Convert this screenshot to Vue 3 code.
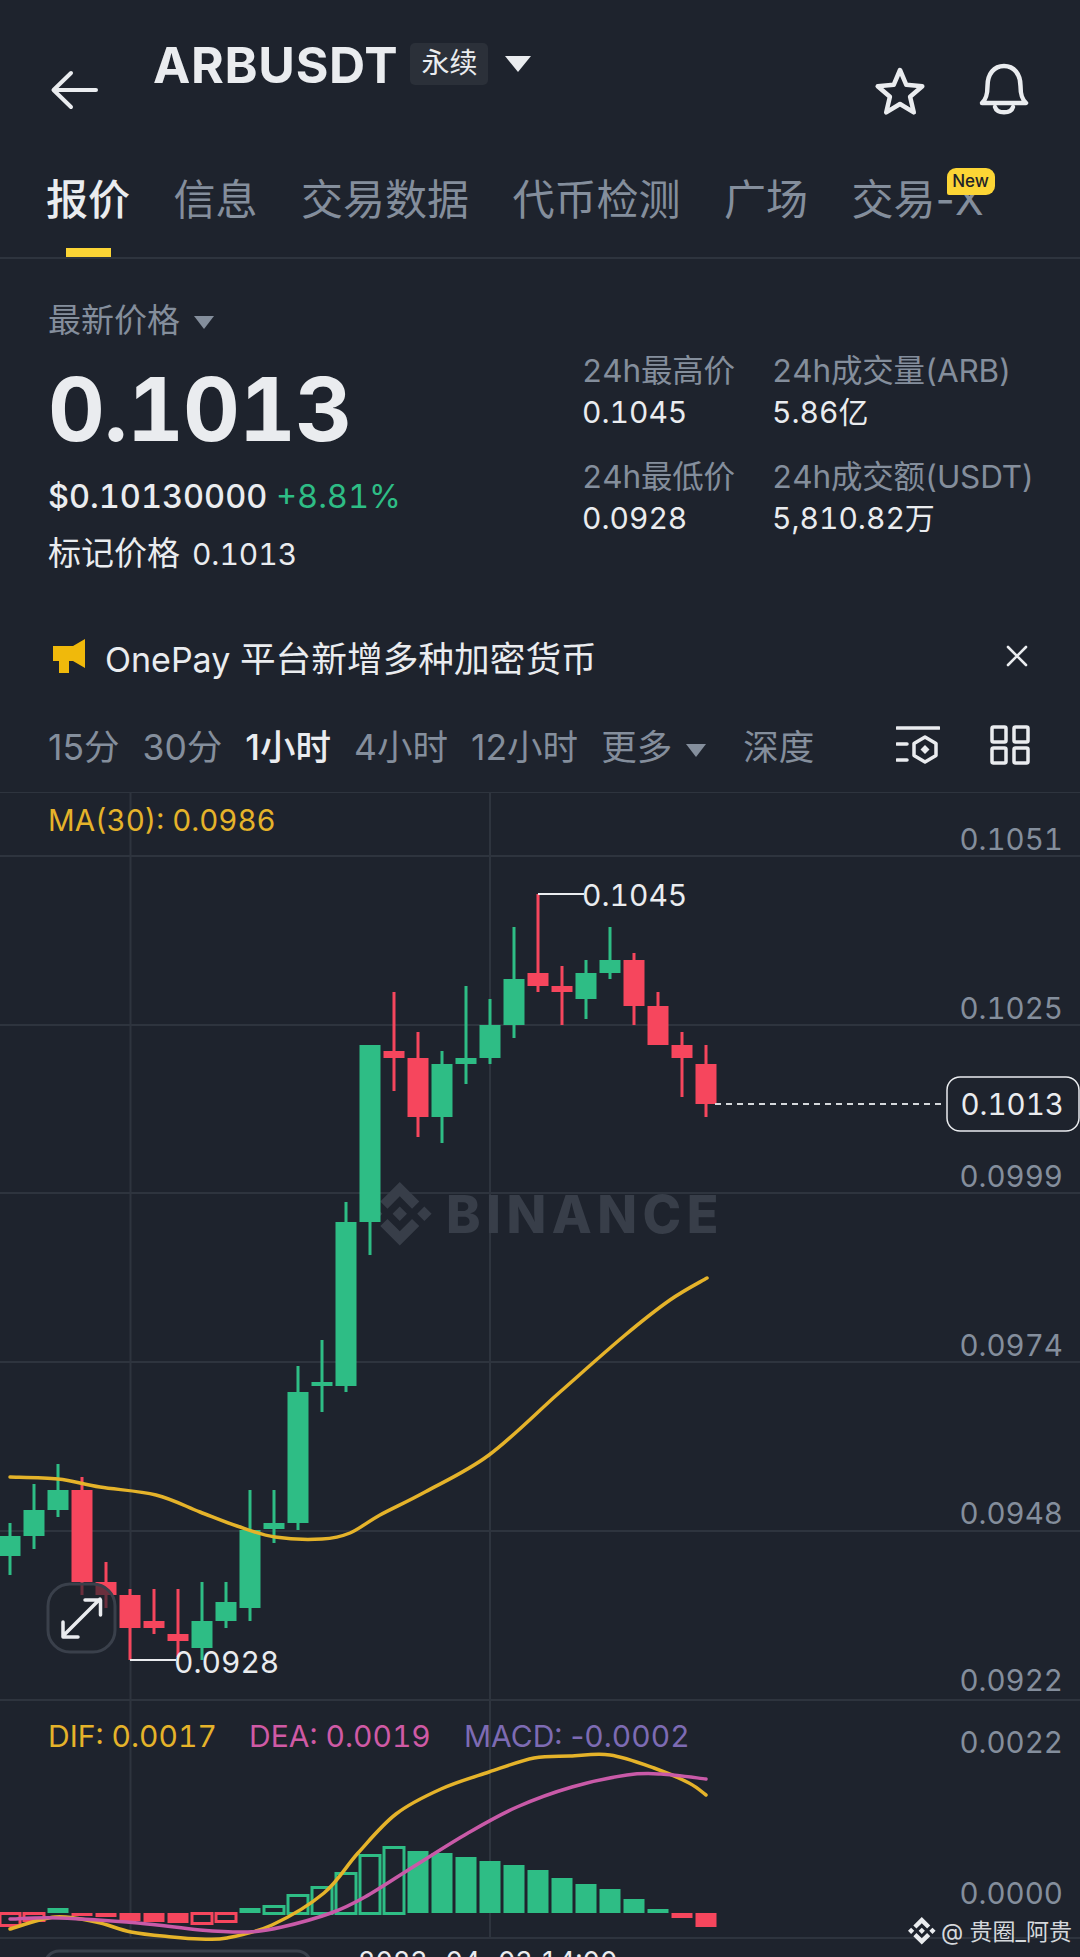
<template>
  <div class="page">
    <header class="topbar">
      <svg class="back" width="48" height="40" viewBox="0 0 48 40">
        <path d="M46 20H4M21 3 3.500 20 21 37" fill="none" stroke="#eaecef" stroke-width="4" stroke-linecap="round" stroke-linejoin="round" />
      </svg>
      <div class="title">
        <span class="symbol">ARBUSDT</span>
        <span class="tag">永续</span>
        <span class="caret"></span>
      </div>
      <svg class="star" width="52" height="50" viewBox="0 0 52 50">
        <path d="M26 4l6.300 14.800 16 1.400-12.200 10.500 3.700 15.700L26 38l-13.800 8.400 3.700-15.700L3.700 20.200l16-1.400z" fill="none" stroke="#eaecef" stroke-width="4.500" stroke-linejoin="round" />
      </svg>
      <svg class="bell" width="52" height="54" viewBox="0 0 52 54">
        <path d="M4 40c4-4 5.500-8 5.500-17C9.500 11 16 3 26 3s16.500 8 16.500 20c0 9 1.500 13 5.500 17z" fill="none" stroke="#eaecef" stroke-width="4.500" stroke-linejoin="round" />
        <path d="M17 44c2 7 16 7 18 0" fill="none" stroke="#eaecef" stroke-width="4.500" stroke-linecap="round" />
      </svg>
    </header>

    <nav class="tabs">
      <div v-for="(t, i) in tabs" :key="t" class="tab" :class="{ active: i === 0 }">
        <span>{{ t }}</span>
        <i v-if="i === 0"></i>
        <b v-if="i === 5" class="new">New</b>
      </div>
    </nav>

    <section class="quote">
      <div class="quote-left">
        <div class="last-label">最新价格<span class="caret grey"></span></div>
        <div class="last-price">0.1013</div>
        <div class="usd">$0.10130000 <span class="up">+8.81%</span></div>
        <div class="mark">标记价格 <span>0.1013</span></div>
      </div>
      <div class="stats">
        <div v-for="s in stats" :key="s.label" class="stat">
          <div class="stat-label">{{ s.label }}</div>
          <div class="stat-value">{{ s.value }}</div>
        </div>
      </div>
    </section>

    <div class="notice">
      <svg width="34" height="36" viewBox="0 0 34 36">
        <path d="M1 8h20L33 1v29l-12-7h-4v12H7V23H1z" fill="#f0b90b" />
      </svg>
      <span class="notice-text"><span class="pay">OnePay</span> 平台新增多种加密货币</span>
      <svg width="22" height="22" viewBox="0 0 22 22">
        <path d="M2 2l18 18M20 2 2 20" stroke="#eaecef" stroke-width="2.600" stroke-linecap="round" />
      </svg>
    </div>

    <div class="intervals">
      <span v-for="(t, i) in intervals" :key="t" class="interval" :class="{ active: i === 2 }">
        {{ t }}<span v-if="t === '更多'" class="caret grey small"></span>
      </span>
      <svg class="tool-a" width="44" height="40" viewBox="0 0 44 40">
        <path d="M1 3h42M1 19h10M1 35h10" stroke="#eaecef" stroke-width="3.500" stroke-linecap="round" />
        <path d="M29 12l11 6.500v12L29 37l-11-6.500v-12z" fill="none" stroke="#eaecef" stroke-width="3.500" stroke-linejoin="round" />
        <path d="M29 20l4.500 4.500L29 29l-4.500-4.500z" fill="#eaecef" />
      </svg>
      <svg width="40" height="40" viewBox="0 0 40 40">
        <g fill="none" stroke="#eaecef" stroke-width="3.500">
          <rect x="2" y="2" width="14" height="15" rx="1.500" />
          <rect x="24" y="2" width="14" height="15" rx="1.500" />
          <rect x="2" y="23" width="14" height="15" rx="1.500" />
          <rect x="24" y="23" width="14" height="15" rx="1.500" />
        </g>
      </svg>
    </div>

    <svg class="chart" width="1080" height="1165" viewBox="0 792 1080 1165">
      <g stroke="#2e343e" stroke-width="2">
        <line v-for="y in gridY" :key="y" x1="0" x2="1080" :y1="y" :y2="y" />
        <line x1="130.500" x2="130.500" y1="792" y2="1938" />
        <line x1="490" x2="490" y1="792" y2="1938" />
      </g>

      <g class="watermark">
        <path transform="translate(368 1182) scale(2.650)" fill="#383e49" :d="logo" />
        <text x="446" y="1233" class="wm-text">BINANCE</text>
      </g>

      <g v-for="c in candles" :key="c[0]" :fill="c[5] ? green : red">
        <rect :x="c[0] - 1.500" :y="c[1]" width="3" :height="c[2] - c[1]" />
        <rect :x="c[0] - 10.500" :y="c[3]" width="21" :height="c[4] - c[3]" />
      </g>

      <path class="line" stroke="#e5b32a" :d="smooth(maLine)" />

      <path d="M538 894H584M130 1660H176" stroke="#eaecef" stroke-width="2" fill="none" />
      <text x="582" y="906" class="val">0.1045</text>
      <text x="174" y="1673" class="val">0.0928</text>

      <line x1="715" x2="946" y1="1104" y2="1104" stroke="#d5d8dc" stroke-width="2" stroke-dasharray="6 5" />
      <rect x="947" y="1077" width="132" height="54" rx="13" fill="#1e232d" stroke="#eaecef" stroke-width="1.500" />
      <text x="1064" y="1115" class="axis bright">0.1013</text>

      <text v-for="a in axis" :key="a[0]" x="1063" :y="a[1]" class="axis">{{ a[0] }}</text>

      <text x="48" y="831" class="legend ma" fill="#e5b32a">MA(30): 0.0986</text>

      <rect x="48" y="1584" width="67" height="68" rx="22" fill="#1e232d" fill-opacity=".65" stroke="#3a404b" stroke-width="3" />
      <path d="M63 1636l37-37M85 1600h15.500v15M63 1622v15h15" fill="none" stroke="#eaecef" stroke-width="3.500" stroke-linecap="round" stroke-linejoin="round" />

      <text x="48" y="1747" class="legend" fill="#e5b32a">DIF: 0.0017</text>
      <text x="249" y="1747" class="legend" fill="#cf5aa5">DEA: 0.0019</text>
      <text x="464" y="1747" class="legend" fill="#7d6bb3"><tspan>MACD: </tspan><tspan class="plain">-</tspan><tspan>0.0002</tspan></text>

      <g v-for="b in bars" :key="b[0]">
        <rect v-if="b[2]" :x="b[0] - 10.500" :y="Math.min(b[1], 1913)" width="21" :height="Math.abs(b[1] - 1913)" :fill="b[1] < 1913 ? green : red" />
        <rect v-else :x="b[0] - 10" :y="Math.min(b[1], 1913) + 0.500" width="20" :height="Math.abs(b[1] - 1913)" fill="none" :stroke="b[1] < 1913 ? green : red" stroke-width="3" />
      </g>

      <path class="line" stroke="#e5b32a" :d="smooth(difLine)" />
      <path class="line" stroke="#c95aa8" :d="smooth(deaLine)" />

      <rect x="45" y="1951" width="266" height="30" rx="14" fill="none" stroke="#3a404b" stroke-width="3" />
      <text x="0" y="1970" class="val tiny">...</text>
      <text x="358" y="1971" class="val tiny">2023-04-03 14:00</text>

      <path transform="translate(908 1917) scale(1.150)" fill="#eaecef" :d="logo" />
      <text x="941" y="1940" class="mark-text">@ 贵圈_阿贵</text>
    </svg>
  </div>
</template>

<script setup>
const green = '#2ebd85'
const red = '#f6465d'

const logo = 'M16.624 13.9202l2.7175 2.7154-7.353 7.353-7.353-7.352 2.7175-2.7164 4.6355 4.6595 4.6356-4.6595zm4.6366-4.6366L24 12l-2.7154 2.7164L18.5682 12l2.6924-2.7164zm-9.272.001l2.7163 2.6914-2.7164 2.7174v-.001L9.2721 12l2.7164-2.7154zm-9.2722-.001L5.4088 12l-2.6914 2.6924L0 12l2.7164-2.7164zM11.9885.0115l7.353 7.329-2.7174 2.7154-4.6356-4.6356-4.6355 4.6595-2.7174-2.7154 7.353-7.353z'

const tabs = ['报价', '信息', '交易数据', '代币检测', '广场', '交易-X']
const intervals = ['15分', '30分', '1小时', '4小时', '12小时', '更多', '深度']

const stats = [
  { label: '24h最高价', value: '0.1045' },
  { label: '24h成交量(ARB)', value: '5.86亿' },
  { label: '24h最低价', value: '0.0928' },
  { label: '24h成交额(USDT)', value: '5,810.82万' }
]

const gridY = [792, 856, 1025, 1193, 1362, 1531, 1700, 1938]

const axis = [
  ['0.1051', 850],
  ['0.1025', 1019],
  ['0.0999', 1187],
  ['0.0974', 1356],
  ['0.0948', 1524],
  ['0.0922', 1691],
  ['0.0022', 1753],
  ['0.0000', 1904]
]

// x, wick top, wick bottom, body top, body bottom, rising
const candles = [
  [10, 1523, 1575, 1536, 1556, 1],
  [34, 1484, 1549, 1510, 1536, 1],
  [58, 1464, 1517, 1490, 1510, 1],
  [82, 1477, 1595, 1490, 1582, 0],
  [106, 1562, 1608, 1582, 1595, 0],
  [130, 1589, 1660, 1595, 1628, 0],
  [154, 1589, 1634, 1621, 1628, 0],
  [178, 1589, 1657, 1634, 1641, 0],
  [202, 1582, 1660, 1621, 1648, 1],
  [226, 1582, 1628, 1602, 1621, 1],
  [250, 1490, 1621, 1530, 1608, 1],
  [274, 1490, 1543, 1523, 1529, 1],
  [298, 1366, 1530, 1392, 1523, 1],
  [322, 1340, 1412, 1382, 1386, 1],
  [346, 1202, 1392, 1222, 1386, 1],
  [370, 1045, 1255, 1045, 1222, 1],
  [394, 992, 1091, 1051, 1058, 0],
  [418, 1032, 1137, 1058, 1117, 0],
  [442, 1051, 1143, 1064, 1117, 1],
  [466, 986, 1084, 1058, 1064, 1],
  [490, 999, 1064, 1025, 1058, 1],
  [514, 927, 1038, 979, 1025, 1],
  [538, 894, 992, 973, 986, 0],
  [562, 966, 1025, 986, 992, 0],
  [586, 960, 1019, 973, 999, 1],
  [610, 927, 979, 960, 973, 1],
  [634, 953, 1025, 960, 1006, 0],
  [658, 992, 1045, 1006, 1045, 0],
  [682, 1032, 1097, 1045, 1058, 0],
  [706, 1045, 1117, 1064, 1104, 0]
]

// x, top of bar (below 1913 when falling), filled
const bars = [
  [10, 1925, 0], [34, 1920, 0], [58, 1908, 1], [82, 1916, 1], [106, 1917, 1],
  [130, 1921, 1], [154, 1922, 1], [178, 1923, 1], [202, 1923, 0], [226, 1921, 0],
  [250, 1908, 1], [274, 1906, 0], [298, 1895, 0], [322, 1887, 0], [346, 1873, 0],
  [370, 1855, 0], [394, 1847, 0], [418, 1851, 1], [442, 1853, 1], [466, 1857, 1],
  [490, 1861, 1], [514, 1865, 1], [538, 1870, 1], [562, 1878, 1], [586, 1884, 1],
  [610, 1889, 1], [634, 1899, 1], [658, 1909, 1], [682, 1918, 1], [706, 1927, 1]
]

const maLine = [[10, 1477], [58, 1479], [100, 1487], [156, 1495], [200, 1512], [237, 1526], [275, 1537], [322, 1539], [350, 1533], [380, 1515], [425, 1492], [489, 1455], [560, 1392], [624, 1336], [670, 1300], [707, 1278]]
const difLine = [[10, 1929], [55, 1917], [96, 1922], [131, 1932], [172, 1937], [200, 1939], [227, 1938], [272, 1925], [324, 1893], [358, 1853], [396, 1814], [441, 1789], [489, 1772], [534, 1758], [570, 1756], [610, 1755], [654, 1768], [689, 1783], [706, 1795]]
const deaLine = [[10, 1919], [59, 1918], [138, 1923], [200, 1930], [248, 1932], [282, 1927], [331, 1913], [365, 1897], [413, 1867], [468, 1833], [517, 1807], [572, 1787], [627, 1775], [661, 1774], [706, 1779]]

// catmull-rom through the points
function smooth(pts) {
  let d = `M${pts[0][0]} ${pts[0][1]}`
  for (let i = 0; i < pts.length - 1; i++) {
    const a = pts[i - 1] || pts[i]
    const b = pts[i]
    const c = pts[i + 1]
    const e = pts[i + 2] || c
    d += `C${b[0] + (c[0] - a[0]) / 6} ${b[1] + (c[1] - a[1]) / 6} ${c[0] - (e[0] - b[0]) / 6} ${c[1] - (e[1] - b[1]) / 6} ${c[0]} ${c[1]}`
  }
  return d
}
</script>

<style>
body {
  background: #1e232d;
}
</style>

<style scoped>
.page {
  width: 1080px;
  height: 1957px;
  overflow: hidden;
  background: #1e232d;
  color: #eaecef;
  font-family: Inter, "Noto Sans CJK SC", sans-serif;
  font-variant-numeric: tabular-nums;
}

.topbar {
  height: 130px;
  display: flex;
  align-items: flex-start;
  padding-left: 50px;
  box-sizing: border-box;
}

.back {
  margin-top: 70px;
}

.title {
  display: flex;
  align-items: flex-start;
  margin-left: 55px;
  margin-top: 37px;
  width: 620px;
}

.symbol {
  font-size: 50px;
  font-weight: 700;
  line-height: 56px;
  letter-spacing: 0.7px;
}

.tag {
  background: #2b3039;
  border-radius: 5px;
  margin-left: 12px;
  margin-top: 6px;
  width: 78px;
  height: 42px;
  text-align: center;
  font-size: 28px;
  line-height: 40px;
}

.caret {
  display: inline-block;
  width: 0;
  height: 0;
  border-left: 13px solid transparent;
  border-right: 13px solid transparent;
  border-top: 16px solid #eaecef;
  margin-left: 17px;
  margin-top: 19px;
}

.caret.grey {
  border-left-width: 10px;
  border-right-width: 10px;
  border-top: 13px solid #848e9c;
  margin-top: 0;
  margin-left: 14px;
  vertical-align: 3px;
}

.caret.small {
  margin-right: 14px;
}

.star {
  margin-top: 66px;
  margin-left: 101px;
}

.bell {
  margin-top: 63px;
  margin-left: 52px;
}

.tabs {
  height: 129px;
  display: flex;
  gap: 43.500px;
  padding-left: 46px;
  border-bottom: 2px solid #2e343e;
  box-sizing: border-box;
  font-variant-numeric: normal;
}

.tab {
  position: relative;
  display: flex;
  flex-direction: column;
  align-items: center;
  font-size: 42px;
  line-height: 56px;
  padding-top: 42px;
  color: #848e9c;
}

.tab.active {
  color: #eaecef;
  font-weight: 500;
}

.tab i {
  width: 45px;
  height: 9px;
  margin-top: 20px;
  background: #fcd535;
}

.new {
  position: absolute;
  top: 38px;
  right: -11px;
  width: 48px;
  height: 27px;
  border-radius: 9px 9px 9px 2px;
  background: #fcd535;
  color: #1e2329;
  font-size: 17px;
  font-weight: 500;
  line-height: 27px;
  text-align: center;
}

.quote {
  height: 351px;
  display: flex;
  padding-left: 48px;
  box-sizing: border-box;
}

.quote-left {
  width: 534px;
  padding-top: 38px;
}

.last-label {
  font-size: 33px;
  line-height: 46px;
  color: #848e9c;
}

.last-price {
  font-size: 88px;
  font-weight: 700;
  line-height: 100px;
  letter-spacing: -0.800px;
  margin-top: 16px;
}

.usd {
  font-size: 32.500px;
  font-weight: 500;
  line-height: 40px;
  margin-top: 18px;
}

.up {
  color: #2ebd85;
  font-weight: 400;
}

.mark {
  font-size: 33px;
  line-height: 44px;
  margin-top: 14px;
}

.mark span {
  font-size: 30px;
  margin-left: 3px;
}

.stats {
  display: grid;
  grid-template-columns: 190px auto;
  grid-auto-rows: 106px;
  padding-top: 91px;
}

.stat-label {
  font-size: 31.500px;
  line-height: 42px;
  letter-spacing: -0.200px;
  color: #848e9c;
}

.stat-value {
  font-size: 30px;
  line-height: 41px;
}

.notice {
  height: 95px;
  display: flex;
  align-items: center;
  padding: 0 52px 3px 52px;
  box-sizing: border-box;
}

.notice-text {
  flex: 1;
  font-size: 35.700px;
  margin-left: 19px;
}

.pay {
  font-size: 34px;
}

.intervals {
  height: 87px;
  display: flex;
  align-items: center;
  padding: 0 50px 8px 48px;
  gap: 23px;
  box-sizing: border-box;
  font-variant-numeric: normal;
}

.interval {
  font-size: 35.500px;
  color: #848e9c;
  white-space: nowrap;
}

.interval.active {
  color: #eaecef;
  font-weight: 500;
}

.tool-a {
  margin-left: auto;
  margin-right: 27px;
}

.chart {
  display: block;
  font-family: Inter, "Noto Sans CJK SC", sans-serif;
}

.line {
  fill: none;
  stroke-width: 3.500;
  stroke-linejoin: round;
  stroke-linecap: round;
}

.wm-text {
  font-size: 52px;
  font-weight: 800;
  letter-spacing: 5.500px;
  fill: #383e49;
}

.val {
  font-size: 30px;
  fill: #eaecef;
}

.val.tiny {
  font-size: 27px;
}

.axis {
  font-size: 29.500px;
  fill: #848e9c;
  text-anchor: end;
}

.axis.bright {
  fill: #eaecef;
}

.legend {
  font-size: 30px;
}

.legend.ma {
  font-size: 29.500px;
}

.plain {
  font-variant-numeric: normal;
}

.mark-text {
  font-size: 23px;
  fill: #d5d8dc;
}
</style>
